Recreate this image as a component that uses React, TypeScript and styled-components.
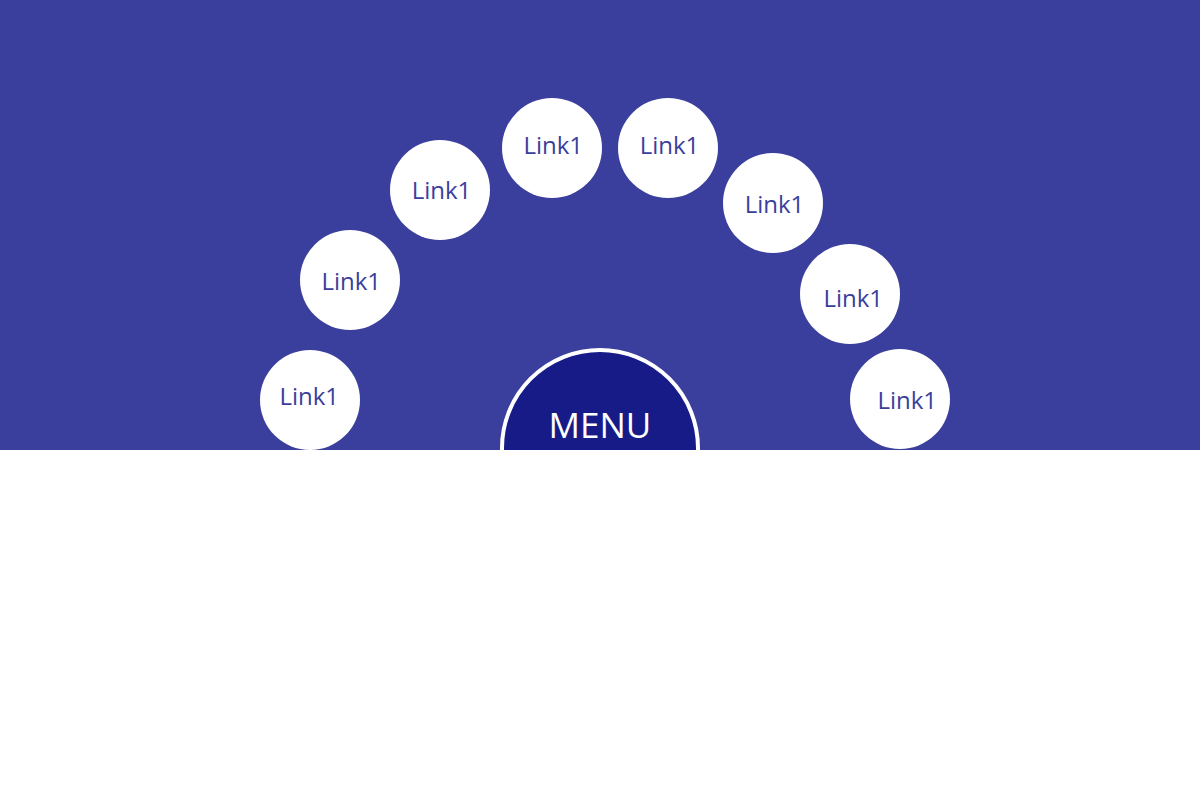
import React from "react";
import styled, { createGlobalStyle } from "styled-components";

const GlobalStyle = createGlobalStyle`
  html, body {
    margin: 0;
    padding: 0;
    background: #ffffff;
    font-family: "Open Sans", "Noto Sans", sans-serif;
  }
  * { box-sizing: border-box; }
`;

const Header = styled.header`
  position: relative;
  width: 100%;
  height: 450px;
  background: #3a3e9c;
  overflow: hidden;
`;

const LinkBubble = styled.a<{ $x: number; $y: number; $dx: number; $dy: number }>`
  position: absolute;
  left: ${(p) => p.$x}px;
  top: ${(p) => p.$y}px;
  width: 100px;
  height: 100px;
  border-radius: 50%;
  background: #ffffff;
  display: flex;
  align-items: center;
  justify-content: center;
  padding-left: ${(p) => (p.$dx > 0 ? p.$dx * 2 : 0)}px;
  padding-right: ${(p) => (p.$dx < 0 ? -p.$dx * 2 : 0)}px;
  padding-top: ${(p) => (p.$dy > 0 ? p.$dy * 2 : 0)}px;
  padding-bottom: ${(p) => (p.$dy < 0 ? -p.$dy * 2 : 0)}px;
  color: #3a3e9c;
  font-size: 24px;
  white-space: nowrap;
  text-decoration: none;
  cursor: pointer;
`;

const MenuButton = styled.button`
  position: absolute;
  left: 500px;
  top: 348px;
  width: 200px;
  height: 200px;
  border-radius: 50%;
  border: 4px solid #ffffff;
  background: #161b87;
  color: #ffffff;
  font-family: "Open Sans", "Noto Sans", sans-serif;
  font-size: 35px;
  line-height: 35px;
  padding: 55px 0 0 0;
  margin: 0;
  display: flex;
  justify-content: center;
  align-items: flex-start;
  cursor: pointer;
`;

const links = [
  { x: 260, y: 350, dx: -0.8, dy: -4.1 },
  { x: 300, y: 230, dx: 1.2, dy: 0.2 },
  { x: 390, y: 140, dx: 1.5, dy: -0.8 },
  { x: 502, y: 98, dx: 1.2, dy: -3.8 },
  { x: 618, y: 98, dx: 1.5, dy: -3.8 },
  { x: 723, y: 153, dx: 1.5, dy: 0.2 },
  { x: 800, y: 244, dx: 3.2, dy: 3.9 },
  { x: 850, y: 349, dx: 7.2, dy: 0.9 },
];

export default function App() {
  return (
    <>
      <GlobalStyle />
      <Header>
        {links.map((l, i) => (
          <LinkBubble key={i} $x={l.x} $y={l.y} $dx={l.dx} $dy={l.dy}>
            Link1
          </LinkBubble>
        ))}
        <MenuButton>MENU</MenuButton>
      </Header>
    </>
  );
}
